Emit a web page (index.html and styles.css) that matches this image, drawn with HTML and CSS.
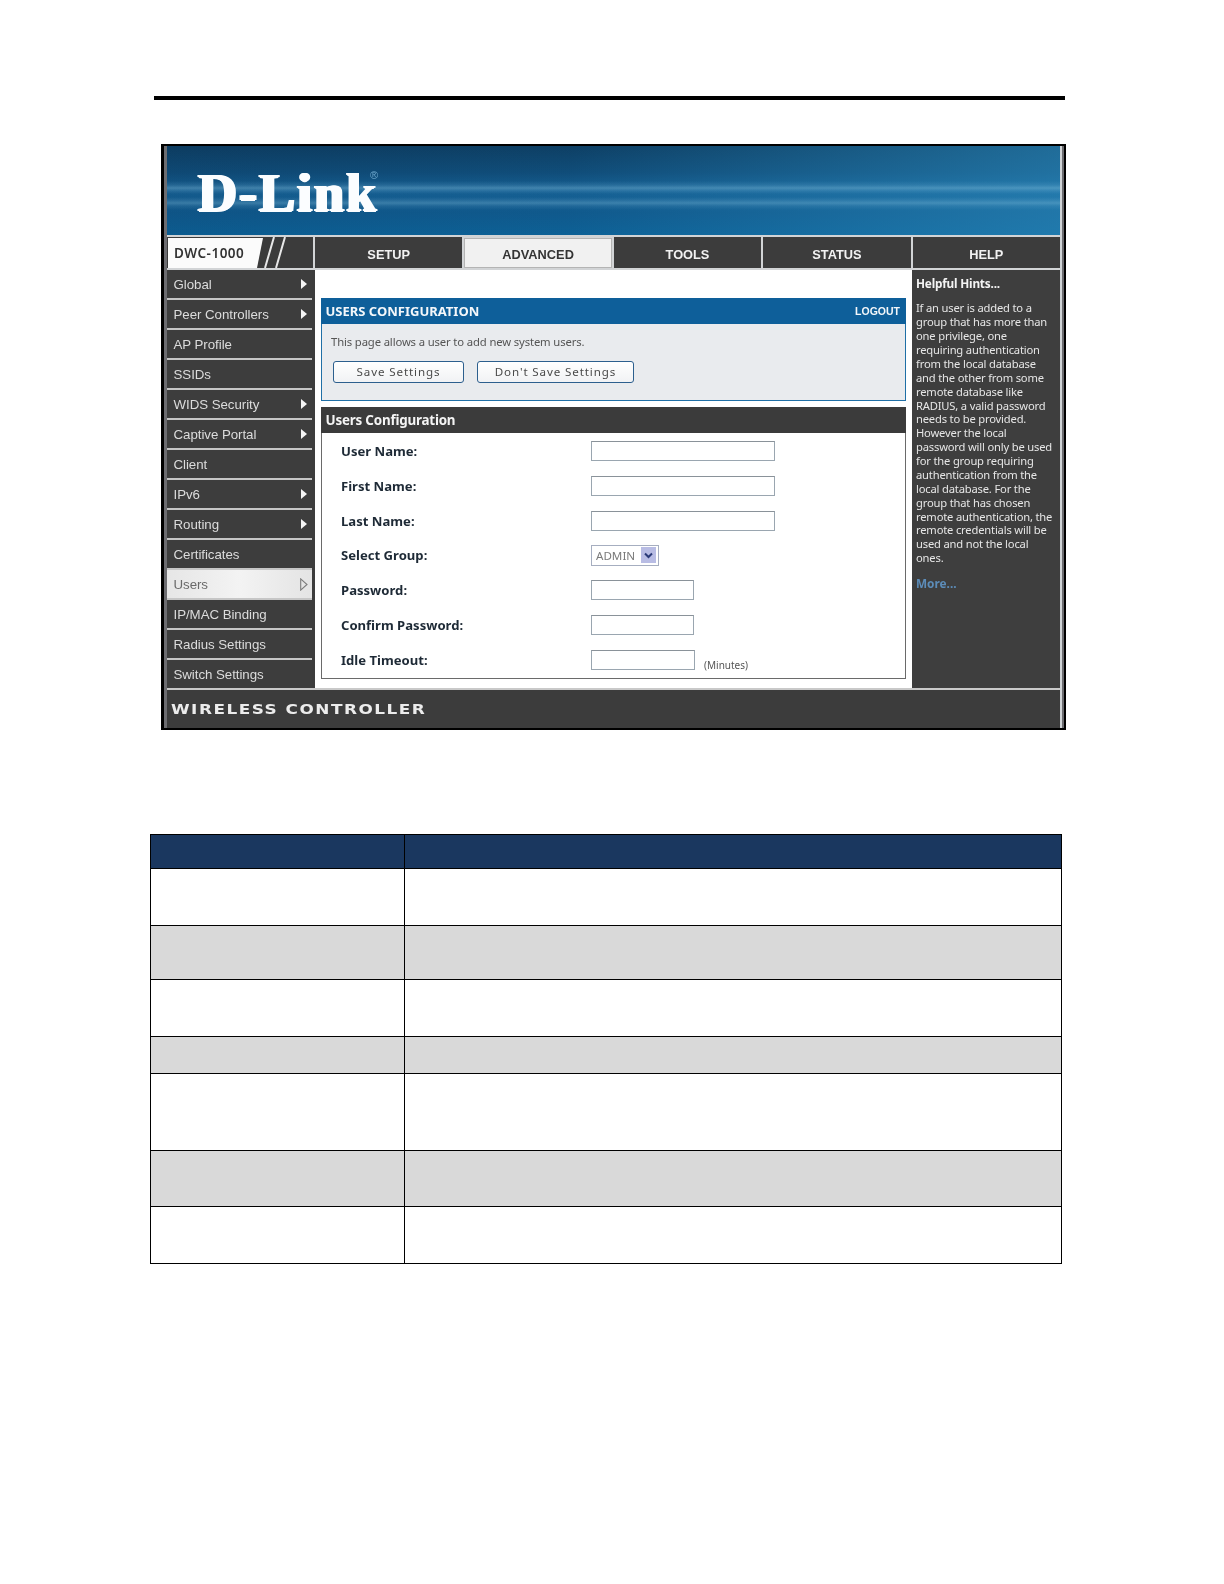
FILE: index.html
```html
<!DOCTYPE html>
<html lang="en">
<head>
<meta charset="utf-8">
<title>Users Configuration</title>
<link rel="stylesheet" href="styles.css">
</head>
<body>
<div class="rule"></div>
<div class="shot">
  <div class="inner">
    <header class="banner"><span class="logo">D-Link<span class="reg">®</span></span></header>
    <nav class="nav">
      <div class="model">
        <svg class="model-art" width="146" height="31" viewBox="0 0 146 31" aria-hidden="true">
          <polygon points="1,1 96,1 90,31 1,31" fill="#fbfbfb"/>
          <path d="M107 0 L98 31 M118 0 L109 31" stroke="#e8e8e8" stroke-width="2" fill="none"/>
        </svg>
        <span class="model-name">DWC-1000</span>
      </div>
      <div class="tab">SETUP</div>
      <div class="tab tab-on">ADVANCED</div>
      <div class="tab">TOOLS</div>
      <div class="tab">STATUS</div>
      <div class="tab">HELP</div>
    </nav>
    <div class="body">
      <ul class="side">
        <li class="item more">Global</li>
        <li class="item more">Peer Controllers</li>
        <li class="item">AP Profile</li>
        <li class="item">SSIDs</li>
        <li class="item more">WIDS Security</li>
        <li class="item more">Captive Portal</li>
        <li class="item">Client</li>
        <li class="item more">IPv6</li>
        <li class="item more">Routing</li>
        <li class="item">Certificates</li>
        <li class="item item-on">Users<svg class="on-arrow" width="8" height="13" viewBox="0 0 8 13" aria-hidden="true"><path d="M.7 .9 L7 6.5 L.7 12.1 Z" fill="none" stroke="#7c7c7c" stroke-width="1.1"/></svg></li>
        <li class="item">IP/MAC Binding</li>
        <li class="item">Radius Settings</li>
        <li class="item">Switch Settings</li>
      </ul>
      <main class="main">
        <section class="intro">
          <div class="intro-bar"><span class="intro-title">USERS CONFIGURATION</span><span class="logout">LOGOUT</span></div>
          <p class="intro-text">This page allows a user to add new system users.</p>
          <div class="actions">
            <button class="btn btn-save" type="button">Save Settings</button>
            <button class="btn btn-cancel" type="button">Don't Save Settings</button>
          </div>
        </section>
        <section class="panel">
          <h2 class="panel-bar">Users Configuration</h2>
          <div class="row"><label class="lbl">User Name:</label><input class="field field-l" type="text"></div>
          <div class="row"><label class="lbl">First Name:</label><input class="field field-l" type="text"></div>
          <div class="row"><label class="lbl">Last Name:</label><input class="field field-l" type="text"></div>
          <div class="row row-short"><label class="lbl">Select Group:</label>
            <div class="pick"><span class="pick-val">ADMIN</span>
              <span class="pick-btn"><svg width="15" height="16" viewBox="0 0 15 16" aria-hidden="true"><path d="M4 6.5 L7.5 10 L11 6.5" stroke="#2a3a78" stroke-width="2" fill="none"/></svg></span>
            </div>
          </div>
          <div class="row"><label class="lbl">Password:</label><input class="field field-s" type="password"></div>
          <div class="row"><label class="lbl">Confirm Password:</label><input class="field field-s" type="password"></div>
          <div class="row"><label class="lbl">Idle Timeout:</label><input class="field field-s2" type="text"><span class="unit">(Minutes)</span></div>
        </section>
      </main>
      <aside class="help">
        <div class="help-title">Helpful Hints...</div>
        <p class="help-text">If an user is added to a<br>group that has more than<br>one privilege, one<br>requiring authentication<br>from the local database<br>and the other from some<br>remote database like<br>RADIUS, a valid password<br>needs to be provided.<br>However the local<br>password will only be used<br>for the group requiring<br>authentication from the<br>local database. For the<br>group that has chosen<br>remote authentication, the<br>remote credentials will be<br>used and not the local<br>ones.</p>
        <div class="help-more">More...</div>
      </aside>
    </div>
    <footer class="foot"><span class="foot-text">WIRELESS CONTROLLER</span></footer>
  </div>
</div>
<table class="spec">
  <colgroup><col class="c1"><col></colgroup>
  <tr class="r-head"><th></th><th></th></tr>
  <tr class="r57"><td></td><td></td></tr>
  <tr class="r54 grey"><td></td><td></td></tr>
  <tr class="r57"><td></td><td></td></tr>
  <tr class="r37 grey"><td></td><td></td></tr>
  <tr class="r77"><td></td><td></td></tr>
  <tr class="r56 grey"><td></td><td></td></tr>
  <tr class="r57"><td></td><td></td></tr>
</table>
</body>
</html>
```
FILE: styles.css
```css
* { box-sizing: border-box; }
html, body { margin: 0; padding: 0; background: #fff; }
body { width: 1224px; height: 1584px; overflow: hidden; font-family: "Liberation Sans", Arial, sans-serif; }

.rule { width: 911px; height: 4px; margin: 96px 0 0 154px; background: #000; }

.shot {
  width: 905px; height: 586px; margin: 44px 0 0 161px;
  border-style: solid; border-color: #000; border-width: 2px 2px 2px 3px;
  background: #6c6c70; padding: 0 2px 0 3px;
}
.inner { height: 100%; border-right: 2px solid #cfd3d6; display: flex; flex-direction: column; background: #3c3c3c; filter: blur(.35px); }

.banner {
  height: 89px; flex: none; display: flex; align-items: flex-start; padding: 20px 0 0 31px;
  background:
    linear-gradient(180deg, transparent 35px, rgba(140,195,225,.14) 39px, rgba(150,205,230,.34) 42px, rgba(140,195,225,.14) 45px, transparent 48px, transparent 51px, rgba(140,195,225,.14) 54px, rgba(150,205,230,.3) 57px, rgba(140,195,225,.12) 60px, transparent 64px),
    linear-gradient(90deg, rgba(10,60,100,.1) 0, rgba(30,130,185,.05) 45%, rgba(45,140,190,.6) 100%),
    linear-gradient(180deg, #0d3c60 0, #0f4a76 30%, #165f92 50%, #0f578a 75%, #0c5f94 100%);
}
.logo {
  position: relative; white-space: nowrap;
  font-family: "Liberation Serif", "Times New Roman", serif; font-weight: 700; font-size: 54px; line-height: 54px;
  letter-spacing: 2px; color: #fbfdff; text-shadow: 1.4px 0 0 #fbfdff, -1.4px 0 0 #fbfdff, 0 .5px 0 #fbfdff;
}
.reg { position: absolute; left: 172px; top: 3px; font-family: "Liberation Sans", sans-serif; font-weight: 400; font-size: 11px; line-height: 12px; letter-spacing: 0; color: #6ea8cc; text-shadow: none; }

.nav {
  flex: none; height: 35px; padding: 2px 0; display: grid; grid-template-columns: 146px repeat(5, 1fr); column-gap: 2px;
  background: #d2d4d6;
}
.model { position: relative; background: #3b3b3b; display: flex; align-items: center; padding-left: 7px; }
.model-art { position: absolute; left: 0; top: 0; }
.model-name { position: relative; font-family: "Noto Sans", sans-serif; font-weight: 600; font-size: 13.5px; letter-spacing: .5px; color: #333; }
.tab { background: #3c3c3c; color: #f2f2f2; font-weight: 700; font-size: 12.8px; display: flex; align-items: center; justify-content: center; padding-top: 3px; }
.tab-on { background: #f1f1f1; color: #343434; margin-top: 1px; border: 1px solid #b4b4b4; padding-top: 3px; }

.body { flex: none; height: 418px; display: grid; grid-template-columns: 145px 3px 597px 148px; }
.side { list-style: none; margin: 0; padding: 0; grid-column: 1; display: grid; grid-auto-rows: 1fr; row-gap: 2px; background: #c6c6c6; }
.item { position: relative; display: flex; align-items: center; padding: 1px 0 0 6.5px; background: #3d3d3d; color: #dcdcdc; font-size: 13.3px; letter-spacing: -.05px; }
.more::after { content: ""; position: absolute; right: 5px; top: 9px; border-left: 6px solid #f4f4f4; border-top: 5px solid transparent; border-bottom: 5px solid transparent; }
.item-on { background: linear-gradient(90deg, #e6e6e6, #f3f3f3 50%, #e4e4e4); color: #6a6a6a; }
.on-arrow { position: absolute; right: 4px; top: 8px; }

.main { grid-column: 3; background: #fff; padding: 28px 6px 0 6px; }
.intro { height: 103px; border: 1px solid #1f6fa6; border-top: 0; background: #e9ebee; }
.intro-bar { height: 26px; margin: 0 -1px; background: #0e5f9a; color: #f4f7fa; display: flex; justify-content: space-between; align-items: center; padding: 0 6px 0 4.5px; font-weight: 700; }
.intro-title { font-family: "Noto Sans", sans-serif; font-size: 13px; }
.logout { font-size: 10.5px; }
.intro-text { margin: 9px 0 0 9px; height: 17px; line-height: 17px; font-family: "Noto Sans", sans-serif; font-size: 11.3px; letter-spacing: -.14px; color: #555; }
.actions { display: flex; gap: 13px; margin: 11px 0 0 11px; }
.btn { height: 22px; padding: 0 0 2px; border: 1px solid #2c5f8e; border-radius: 3px; background: linear-gradient(#fff, #f1f2f4); font-family: "Noto Sans", sans-serif; font-size: 11.6px; letter-spacing: .88px; color: #4a4a4a; }
.btn-save { width: 131px; }
.btn-cancel { width: 157px; }

.panel { margin-top: 6px; height: 272px; border: 1px solid #6a6a6a; border-top: 0; }
.panel-bar { height: 26px; margin: 0 -1px; padding: 0 0 0 4.5px; background: #3b3b3b; color: #f4f4f4; font-family: "Noto Sans", sans-serif; font-size: 13.4px; font-weight: 700; line-height: 26px; letter-spacing: -.2px; }
.row { height: 35px; display: flex; align-items: center; padding-left: 19px; }
.row-short { height: 34px; }
.lbl { width: 250px; flex: none; font-family: "Noto Sans", sans-serif; font-weight: 700; font-size: 13.1px; color: #1e2a36; }
.field { height: 20px; padding: 0; border: 1px solid #9aa6b0; border-top-color: #8a9299; background: #fff; }
.field-l { width: 184px; }
.field-s { width: 103px; }
.field-s2 { width: 104px; }
.unit { margin: 10px 0 0 9px; font-family: "Noto Sans", sans-serif; font-size: 10px; color: #555; }
.pick { width: 68px; height: 21px; border: 1px solid #a6aec0; display: flex; align-items: center; justify-content: space-between; padding: 0 2px 0 4px; background: #fff; }
.pick-val { font-family: "Noto Sans", sans-serif; font-size: 11.6px; color: #7a7a7a; }
.pick-btn { width: 15px; height: 16px; background: #b8bce4; display: flex; }

.help { grid-column: 4; background: #3e3e3e; color: #e6e6e6; padding: 6px 0 0 4px; font-family: "Noto Sans", sans-serif; white-space: nowrap; }
.help-title { font-weight: 700; font-size: 11.8px; line-height: 14px; color: #f4f4f4; letter-spacing: -.2px; }
.help-text { margin: 11.4px 0 0; font-size: 11.2px; line-height: 13.87px; letter-spacing: -.18px; }
.help-more { margin-top: 10.7px; font-weight: 700; font-size: 11.8px; line-height: 14px; color: #5c8cb8; }

.foot { flex: 1; border-top: 2px solid #c9c9c9; display: flex; align-items: center; padding-left: 4px; background: #3c3c3c; color: #ececec; font-family: "DejaVu Sans", sans-serif; font-weight: 700; font-size: 13.5px; letter-spacing: 1.2px; }
.foot-text { display: inline-block; white-space: nowrap; transform: scaleX(1.25); transform-origin: left center; }

.spec { width: 912px; margin: 104px 0 0 150px; border-collapse: collapse; table-layout: fixed; }
.c1 { width: 254px; }
.spec td, .spec th { padding: 0; border: 1px solid #000; }
.r-head th { height: 34px; background: #1a375f; }
.r-head th + th { border-left-color: #fff; }
.grey td { background: #d9d9d9; }
.r57 td { height: 57px; }
.r54 td { height: 54px; }
.r37 td { height: 37px; }
.r77 td { height: 77px; }
.r56 td { height: 56px; }
```
